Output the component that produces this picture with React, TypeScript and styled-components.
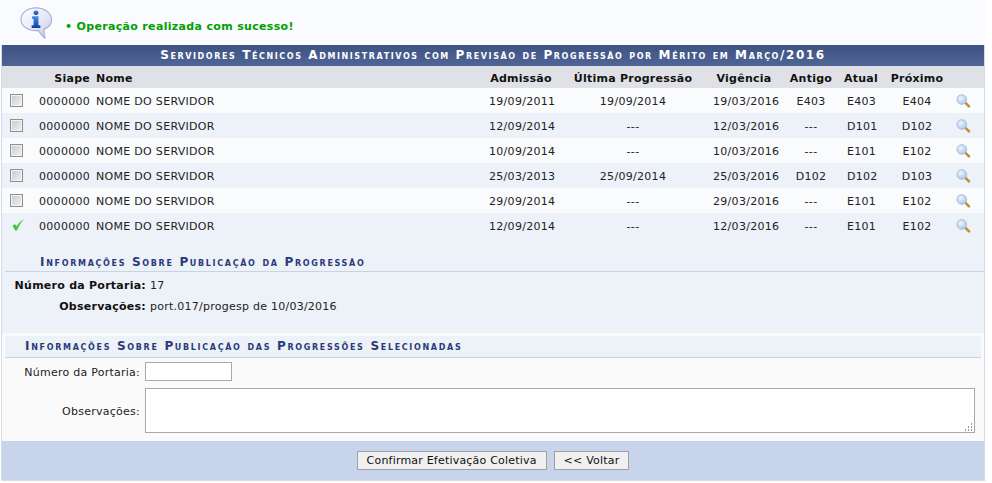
import React from "react";
import styled, { createGlobalStyle } from "styled-components";

const GlobalStyle = createGlobalStyle`
  html, body {
    margin: 0;
    padding: 0;
    background: #ffffff;
    font-family: "DejaVu Sans", Verdana, sans-serif;
    font-size: 11px;
    letter-spacing: 0.25px;
    color: #222222;
  }
`;

const Page = styled.div`
  width: 985px;
`;

const MessageBar = styled.div`
  display: flex;
  align-items: flex-start;
  height: 45px;
  padding: 7px 0 0 20px;
  box-sizing: border-box;
  background: #fafbfe;
`;

const MessageText = styled.div`
  margin: 13px 0 0 12px;
  color: #00a000;
  font-weight: bold;
  font-size: 11px;
  letter-spacing: 0.33px;
  line-height: 14px;
`;

const Panel = styled.div`
  margin-left: 1px;
  border-left: 1px solid #d4dbe8;
  border-right: 1px solid #d4dbe8;
`;

const Title = styled.div`
  height: 21px;
  line-height: 21px;
  text-align: center;
  color: #ffffff;
  font-weight: bold;
  font-size: 12px;
  font-variant: small-caps;
  letter-spacing: 1.59px;
  white-space: nowrap;
  background: linear-gradient(#3f5382, #4f6596);
`;

const Table = styled.table`
  width: 100%;
  table-layout: fixed;
  border-collapse: collapse;
`;

const Col = styled.col<{ $w: number }>`
  width: ${(p) => p.$w}px;
`;

const HeadRow = styled.tr`
  height: 22px;
  background: #dfe1e6;
`;

const Th = styled.th<{ $align?: string; $pad?: number }>`
  padding: 2px ${(p) => p.$pad ?? 0}px 0;
  font-size: 11px;
  font-weight: bold;
  color: #111111;
  white-space: nowrap;
  text-align: ${(p) => p.$align || "center"};
`;

const Row = styled.tr<{ $alt: boolean }>`
  height: 25px;
  background: ${(p) => (p.$alt ? "#edf1f8" : "#fafbfd")};
`;

const Td = styled.td<{ $align?: string }>`
  padding: 2px 3px 0;
  font-size: 11px;
  letter-spacing: 0.3px;
  color: #222222;
  white-space: nowrap;
  text-align: ${(p) => p.$align || "center"};
`;

const IconCell = styled(Td)`
  padding: 0;
  text-align: left;
  line-height: 0;
`;

const CheckBox = styled.span`
  display: inline-block;
  width: 11px;
  height: 11px;
  margin-left: 8px;
  border: 1px solid #8f8f8f;
  background: linear-gradient(135deg, #c9c9c9, #e6e6e6 70%, #f4f4f4);
  box-shadow: inset 0 0 0 1px #f2f2f2;
`;

const CheckSlot = styled.span`
  display: inline-flex;
  margin: 0 0 1px 10px;
`;

const LensSlot = styled.span`
  display: inline-flex;
`;

const InfoBlock = styled.div`
  background: #edf1f8;
  padding: 15px 0 0 3px;
  height: 95px;
  box-sizing: border-box;
`;

const SubTitle = styled.div`
  height: 18px;
  line-height: 18px;
  padding-left: 35px;
  color: #2a3a78;
  font-weight: bold;
  font-size: 12px;
  font-variant: small-caps;
  letter-spacing: 1.68px;
  white-space: nowrap;
  border-bottom: 1px solid #c6d2e6;
`;

const InfoGrid = styled.div`
  display: grid;
  grid-template-columns: 145px 1fr;
  row-gap: 7px;
  margin-top: 7px;
  line-height: 14px;
`;

const InfoLabel = styled.div`
  font-weight: bold;
  color: #111111;
  text-align: right;
  padding-right: 4px;
  white-space: nowrap;
`;

const InfoValue = styled.div`
  color: #222222;
`;

const FormBlock = styled.div`
  background: #fafafa;
  padding-top: 3px;
  height: 108px;
  box-sizing: border-box;
`;

const FormTitle = styled(SubTitle)`
  height: 21px;
  line-height: 21px;
  padding-left: 20px;
  background: #edf1f8;
  margin: 0 3px;
`;

const FormGrid = styled.div`
  display: grid;
  grid-template-columns: 138px 1fr;
  column-gap: 5px;
  row-gap: 7px;
  margin-top: 4px;
  align-items: center;
`;

const FormLabel = styled.label`
  padding-top: 1px;
  text-align: right;
  color: #222222;
  white-space: nowrap;
`;

const TextInput = styled.input`
  width: 87px;
  height: 19px;
  box-sizing: border-box;
  border: 1px solid #a9a9a9;
  background: #ffffff;
  padding: 0;
  outline: none;
  display: block;
`;

const TextAreaWrap = styled.div`
  position: relative;
  width: 830px;
  height: 45px;
`;

const TextArea = styled.textarea`
  display: block;
  width: 100%;
  height: 100%;
  box-sizing: border-box;
  border: 1px solid #a9a9a9;
  background: #ffffff;
  padding: 0;
  outline: none;
  resize: none;
`;

const Grip = styled.svg`
  position: absolute;
  right: 2px;
  bottom: 2px;
`;

const Footer = styled.div`
  display: flex;
  justify-content: center;
  align-items: flex-start;
  gap: 7px;
  height: 40px;
  box-sizing: border-box;
  padding-top: 10px;
  background: #c8d4eb;
  border-bottom: 1px solid #d4dbe8;
`;

const Button = styled.button`
  height: 19px;
  padding: 0 9px;
  border: 1px solid #a0a0a0;
  background: #f0f0f0;
  color: #111111;
  font-family: "DejaVu Sans", Verdana, sans-serif;
  font-size: 11px;
  letter-spacing: 0.2px;
  line-height: 16px;
  border-radius: 0;
`;

const InfoIcon = () => (
  <svg width="33" height="33" viewBox="0 0 34 37" preserveAspectRatio="none">
    <defs>
      <linearGradient id="bubble" x1="0" y1="0" x2="1" y2="1">
        <stop offset="0" stopColor="#ffffff" />
        <stop offset="0.6" stopColor="#e3e5f6" />
        <stop offset="1" stopColor="#b9bde0" />
      </linearGradient>
      <linearGradient id="letter" x1="0" y1="0" x2="0" y2="1">
        <stop offset="0" stopColor="#3f8fe8" />
        <stop offset="1" stopColor="#0f3fa8" />
      </linearGradient>
    </defs>
    <path
      d="M16.500 1C7.500 1 1 7 1 14s6.500 12.500 15.500 12.500c1 0 1.500 0 2.500-.2 1.500 3 3.500 5.700 7 9.200-1.200-3.500-1.500-7-1.300-10.500 4.800-2 7.800-5.900 7.800-10.500C32.500 7 25.500 1 16.500 1z"
      fill="url(#bubble)"
      stroke="#a9aed2"
      strokeWidth="1.200"
    />
    <circle cx="16.500" cy="6.500" r="2.600" fill="url(#letter)" />
    <path d="M12.500 10.500h6.500v10h2v3h-9v-3h2v-7h-1.500z" fill="url(#letter)" />
  </svg>
);

const LensIcon = () => (
  <svg width="15" height="14" viewBox="0 0 15 14">
    <defs>
      <radialGradient id="glass" cx="0.4" cy="0.35" r="0.7">
        <stop offset="0" stopColor="#eef5fd" />
        <stop offset="1" stopColor="#a6c4e6" />
      </radialGradient>
    </defs>
    <path d="M9.500 8.800l3.500 3.500" stroke="#c58a3e" strokeWidth="2.600" strokeLinecap="round" />
    <circle cx="5.800" cy="5.500" r="4.800" fill="url(#glass)" stroke="#a9bed8" strokeWidth="1" />
  </svg>
);

const CheckIcon = () => (
  <svg width="12" height="12" viewBox="0 0 13 13">
    <path
      d="M0.800 7.200l2.400-1.500 1.800 2.500C6.500 5.300 9 2.800 12.300.8 9.500 3.800 7.200 7.500 5.400 12.300h-1.900z"
      fill="#3cc43c"
      stroke="#66d466"
      strokeWidth="0.400"
    />
  </svg>
);

const gripDots = [
  [6, 0],
  [3, 3],
  [6, 3],
  [0, 6],
  [3, 6],
  [6, 6],
];

const rows = [
  { adm: "19/09/2011", ult: "19/09/2014", vig: "19/03/2016", ant: "E403", atu: "E403", pro: "E404" },
  { adm: "12/09/2014", ult: "---", vig: "12/03/2016", ant: "---", atu: "D101", pro: "D102" },
  { adm: "10/09/2014", ult: "---", vig: "10/03/2016", ant: "---", atu: "E101", pro: "E102" },
  { adm: "25/03/2013", ult: "25/09/2014", vig: "25/03/2016", ant: "D102", atu: "D102", pro: "D103" },
  { adm: "29/09/2014", ult: "---", vig: "29/03/2016", ant: "---", atu: "E101", pro: "E102" },
  { adm: "12/09/2014", ult: "---", vig: "12/03/2016", ant: "---", atu: "E101", pro: "E102", done: true },
];

const colWidths = [34, 57, 393, 70, 154, 68, 66, 34, 78, 28];

export default function App() {
  return (
    <Page>
      <GlobalStyle />
      <MessageBar>
        <InfoIcon />
        <MessageText>• Operação realizada com sucesso!</MessageText>
      </MessageBar>
      <Panel>
        <Title>Servidores Técnicos Administrativos com Previsão de Progressão por Mérito em Março/2016</Title>
        <Table>
          <colgroup>
            {colWidths.map((w, i) => (
              <Col key={i} $w={w} />
            ))}
          </colgroup>
          <thead>
            <HeadRow>
              <Th />
              <Th $align="right" $pad={3}>Siape</Th>
              <Th $align="left" $pad={3}>Nome</Th>
              <Th>Admissão</Th>
              <Th>Última Progressão</Th>
              <Th>Vigência</Th>
              <Th>Antigo</Th>
              <Th>Atual</Th>
              <Th>Próximo</Th>
              <Th />
            </HeadRow>
          </thead>
          <tbody>
            {rows.map((r, i) => (
              <Row key={i} $alt={i % 2 === 1}>
                <IconCell>
                  {r.done ? (
                    <CheckSlot>
                      <CheckIcon />
                    </CheckSlot>
                  ) : (
                    <CheckBox />
                  )}
                </IconCell>
                <Td $align="right">0000000</Td>
                <Td $align="left">NOME DO SERVIDOR</Td>
                <Td>{r.adm}</Td>
                <Td>{r.ult}</Td>
                <Td>{r.vig}</Td>
                <Td>{r.ant}</Td>
                <Td>{r.atu}</Td>
                <Td>{r.pro}</Td>
                <IconCell>
                  <LensSlot>
                    <LensIcon />
                  </LensSlot>
                </IconCell>
              </Row>
            ))}
          </tbody>
        </Table>
        <InfoBlock>
          <SubTitle>Informações Sobre Publicação da Progressão</SubTitle>
          <InfoGrid>
            <InfoLabel>Número da Portaria:</InfoLabel>
            <InfoValue>17</InfoValue>
            <InfoLabel>Observações:</InfoLabel>
            <InfoValue>port.017/progesp de 10/03/2016</InfoValue>
          </InfoGrid>
        </InfoBlock>
        <FormBlock>
          <FormTitle>Informações Sobre Publicação das Progressões Selecionadas</FormTitle>
          <FormGrid>
            <FormLabel>Número da Portaria:</FormLabel>
            <TextInput type="text" />
            <FormLabel>Observações:</FormLabel>
            <TextAreaWrap>
              <TextArea />
              <Grip width="8" height="8" viewBox="0 0 8 8">
                {gripDots.map(([x, y]) => (
                  <rect key={`${x}-${y}`} x={x} y={y} width="1" height="2" fill="#9a9a9a" />
                ))}
              </Grip>
            </TextAreaWrap>
          </FormGrid>
        </FormBlock>
        <Footer>
          <Button>Confirmar Efetivação Coletiva</Button>
          <Button>&lt;&lt; Voltar</Button>
        </Footer>
      </Panel>
    </Page>
  );
}
